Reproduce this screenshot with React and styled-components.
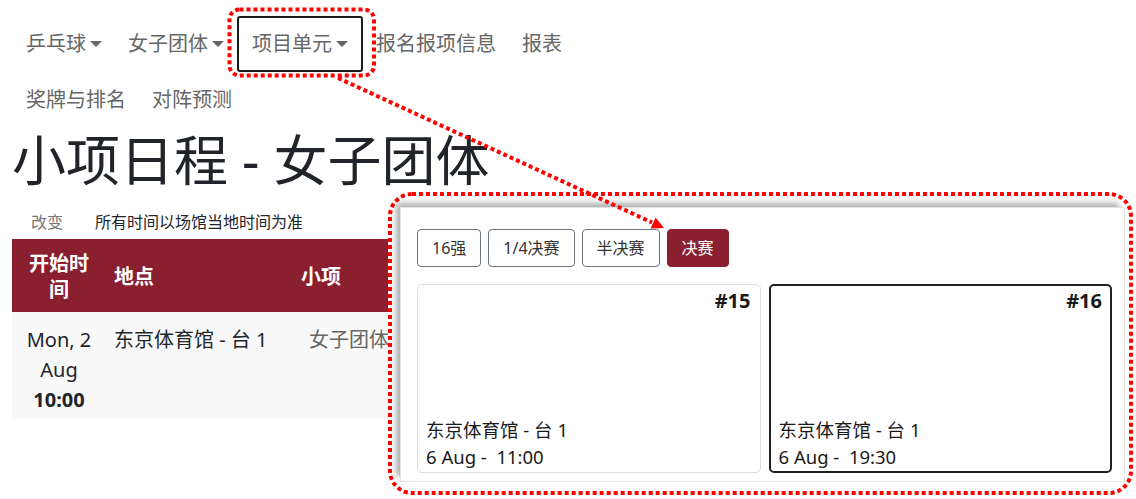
import React from 'react'
import styled, { createGlobalStyle } from 'styled-components'

const GlobalStyle = createGlobalStyle`
  body {
    margin: 0;
    background: #fff;
    font-family: "Noto Sans", "Noto Sans CJK SC", sans-serif;
    color: #212529;
  }
`

const Page = styled.div`
  position: relative;
  width: 1136px;
  height: 499px;
  overflow: hidden;
`

const Nav = styled.nav`
  display: flex;
  flex-wrap: wrap;
  width: 600px;
  padding: 16px 0 0 13px;
  box-sizing: border-box;
`

const NavLink = styled.a`
  display: flex;
  align-items: center;
  padding: ${props => props.active ? '14px 13px' : '16px 13px'};
  border: ${props => props.active ? '2px solid #1a1a1a' : 'none'};
  border-radius: 3px;
  font-size: 20px;
  line-height: 24px;
  color: #666;
  white-space: nowrap;
`

const Caret = styled.span`
  display: inline-block;
  margin-left: 4px;
  border-top: 6px solid #666;
  border-left: 6px solid transparent;
  border-right: 6px solid transparent;
`

const Title = styled.h1`
  margin: 0 0 0 12px;
  font-size: 54px;
  line-height: 65px;
  font-weight: 400;
  color: #212529;
`

const Note = styled.div`
  display: flex;
  gap: 32px;
  margin-top: 17px;
  padding-left: 31px;
  font-size: 16px;
  line-height: 24px;
`

const ChangeLink = styled.span`
  color: #777;
`

const Table = styled.table`
  margin: 5px 12px 0;
  width: calc(100% - 24px);
  border-collapse: collapse;
  table-layout: fixed;
  font-size: 20px;
`

const Th = styled.th`
  background: #891f2f;
  color: #fff;
  font-weight: 700;
  line-height: 26px;
  padding: 12px 8px 9px;
  text-align: ${props => props.center ? 'center' : 'left'};
  vertical-align: middle;
`

const Td = styled.td`
  background: #f9f9f9;
  line-height: 30px;
  padding: 13px 8px 3px ${props => props.indent ? '16px' : '8px'};
  text-align: ${props => props.center ? 'center' : 'left'};
  vertical-align: top;
  color: ${props => props.muted ? '#666' : '#212529'};
`

const Callout = styled.div`
  position: absolute;
  left: 388px;
  top: 192px;
  width: 745px;
  height: 303px;
  box-sizing: border-box;
  padding: 15px 8px 13px 12px;
  background: #fff;
  border-radius: 22px;
`

const Shot = styled.div`
  height: 100%;
  box-sizing: border-box;
  display: flex;
  flex-direction: column;
  padding: 21px 12px 8px 16px;
  background: #fff;
  border: 1px solid #e3e3e3;
  box-shadow: -5px -5px 6px -1px rgba(0, 0, 0, 0.32);
`

const ButtonRow = styled.div`
  display: flex;
  gap: 7px;
`

const RoundButton = styled.button`
  font-family: inherit;
  font-size: 16px;
  line-height: 24px;
  padding: 6px 14px;
  border-radius: 4px;
  border: 1px solid ${props => props.active ? '#891f2f' : '#6c757d'};
  background: ${props => props.active ? '#891f2f' : '#fff'};
  color: ${props => props.active ? '#fff' : '#333'};
`

const Cards = styled.div`
  flex: 1;
  display: grid;
  grid-template-columns: 1fr 1fr;
  gap: 8px;
  margin-top: 17px;
`

const MatchCard = styled.div`
  display: flex;
  flex-direction: column;
  border: ${props => props.selected ? '2px solid #222' : '1px solid #dedede'};
  border-radius: 5px;
  padding: ${props => props.selected ? '1px 8px 1px 8px' : '2px 9px 2px 8px'};
  color: #1a1a1a;
`

const MatchNo = styled.div`
  align-self: flex-end;
  font-size: 20px;
  line-height: 27px;
  font-weight: 700;
`

const MatchInfo = styled.div`
  margin-top: auto;
  font-size: 18.5px;
  line-height: 27px;
`

const Annotation = styled.svg`
  position: absolute;
  left: 0;
  top: 0;
  pointer-events: none;
`

const navItems = [
  { label: '乒乓球', caret: true },
  { label: '女子团体', caret: true },
  { label: '项目单元', caret: true, active: true },
  { label: '报名报项信息' },
  { label: '报表' },
  { label: '奖牌与排名' },
  { label: '对阵预测' },
]

const rounds = ['16强', '1/4决赛', '半决赛', '决赛']

const matches = [
  { no: '#15', venue: '东京体育馆 - 台 1', time: '6 Aug -\u00a0 11:00' },
  { no: '#16', venue: '东京体育馆 - 台 1', time: '6 Aug -\u00a0 19:30', selected: true },
]

export default function App() {
  return (
    <Page>
      <GlobalStyle />
      <Nav>
        {navItems.map(item => (
          <NavLink key={item.label} active={item.active}>
            {item.label}
            {item.caret && <Caret />}
          </NavLink>
        ))}
      </Nav>

      <Title>小项日程 - 女子团体</Title>

      <Note>
        <ChangeLink>改变</ChangeLink>
        <span>所有时间以场馆当地时间为准</span>
      </Note>

      <Table>
        <colgroup>
          <col style={{ width: 94 }} />
          <col style={{ width: 187 }} />
          <col style={{ width: 240 }} />
          <col />
        </colgroup>
        <thead>
          <tr>
            <Th center>开始时间</Th>
            <Th>地点</Th>
            <Th>小项</Th>
            <Th>比赛</Th>
          </tr>
        </thead>
        <tbody>
          <tr>
            <Td center>Mon, 2 Aug<br /><b>10:00</b></Td>
            <Td>东京体育馆 - 台 1</Td>
            <Td indent muted>女子团体16强</Td>
            <Td></Td>
          </tr>
        </tbody>
      </Table>

      <Callout>
        <Shot>
          <ButtonRow>
            {rounds.map(r => (
              <RoundButton key={r} active={r === '决赛'}>{r}</RoundButton>
            ))}
          </ButtonRow>
          <Cards>
            {matches.map(m => (
              <MatchCard key={m.no} selected={m.selected}>
                <MatchNo>{m.no}</MatchNo>
                <MatchInfo>
                  <div>{m.venue}</div>
                  <div>{m.time}</div>
                </MatchInfo>
              </MatchCard>
            ))}
          </Cards>
        </Shot>
      </Callout>

      <Annotation width="1136" height="499" viewBox="0 0 1136 499">
        <g fill="none" stroke="#f00" strokeWidth="4" strokeDasharray="4 3">
          <rect x="229.5" y="9.5" width="144.5" height="66" rx="10" />
          <rect x="390" y="194" width="741" height="299" rx="22" />
          <line x1="338" y1="78" x2="652" y2="222.5" />
        </g>
        <polygon points="664,228 650.6,228.4 655.6,217.6" fill="#f00" />
      </Annotation>
    </Page>
  )
}
